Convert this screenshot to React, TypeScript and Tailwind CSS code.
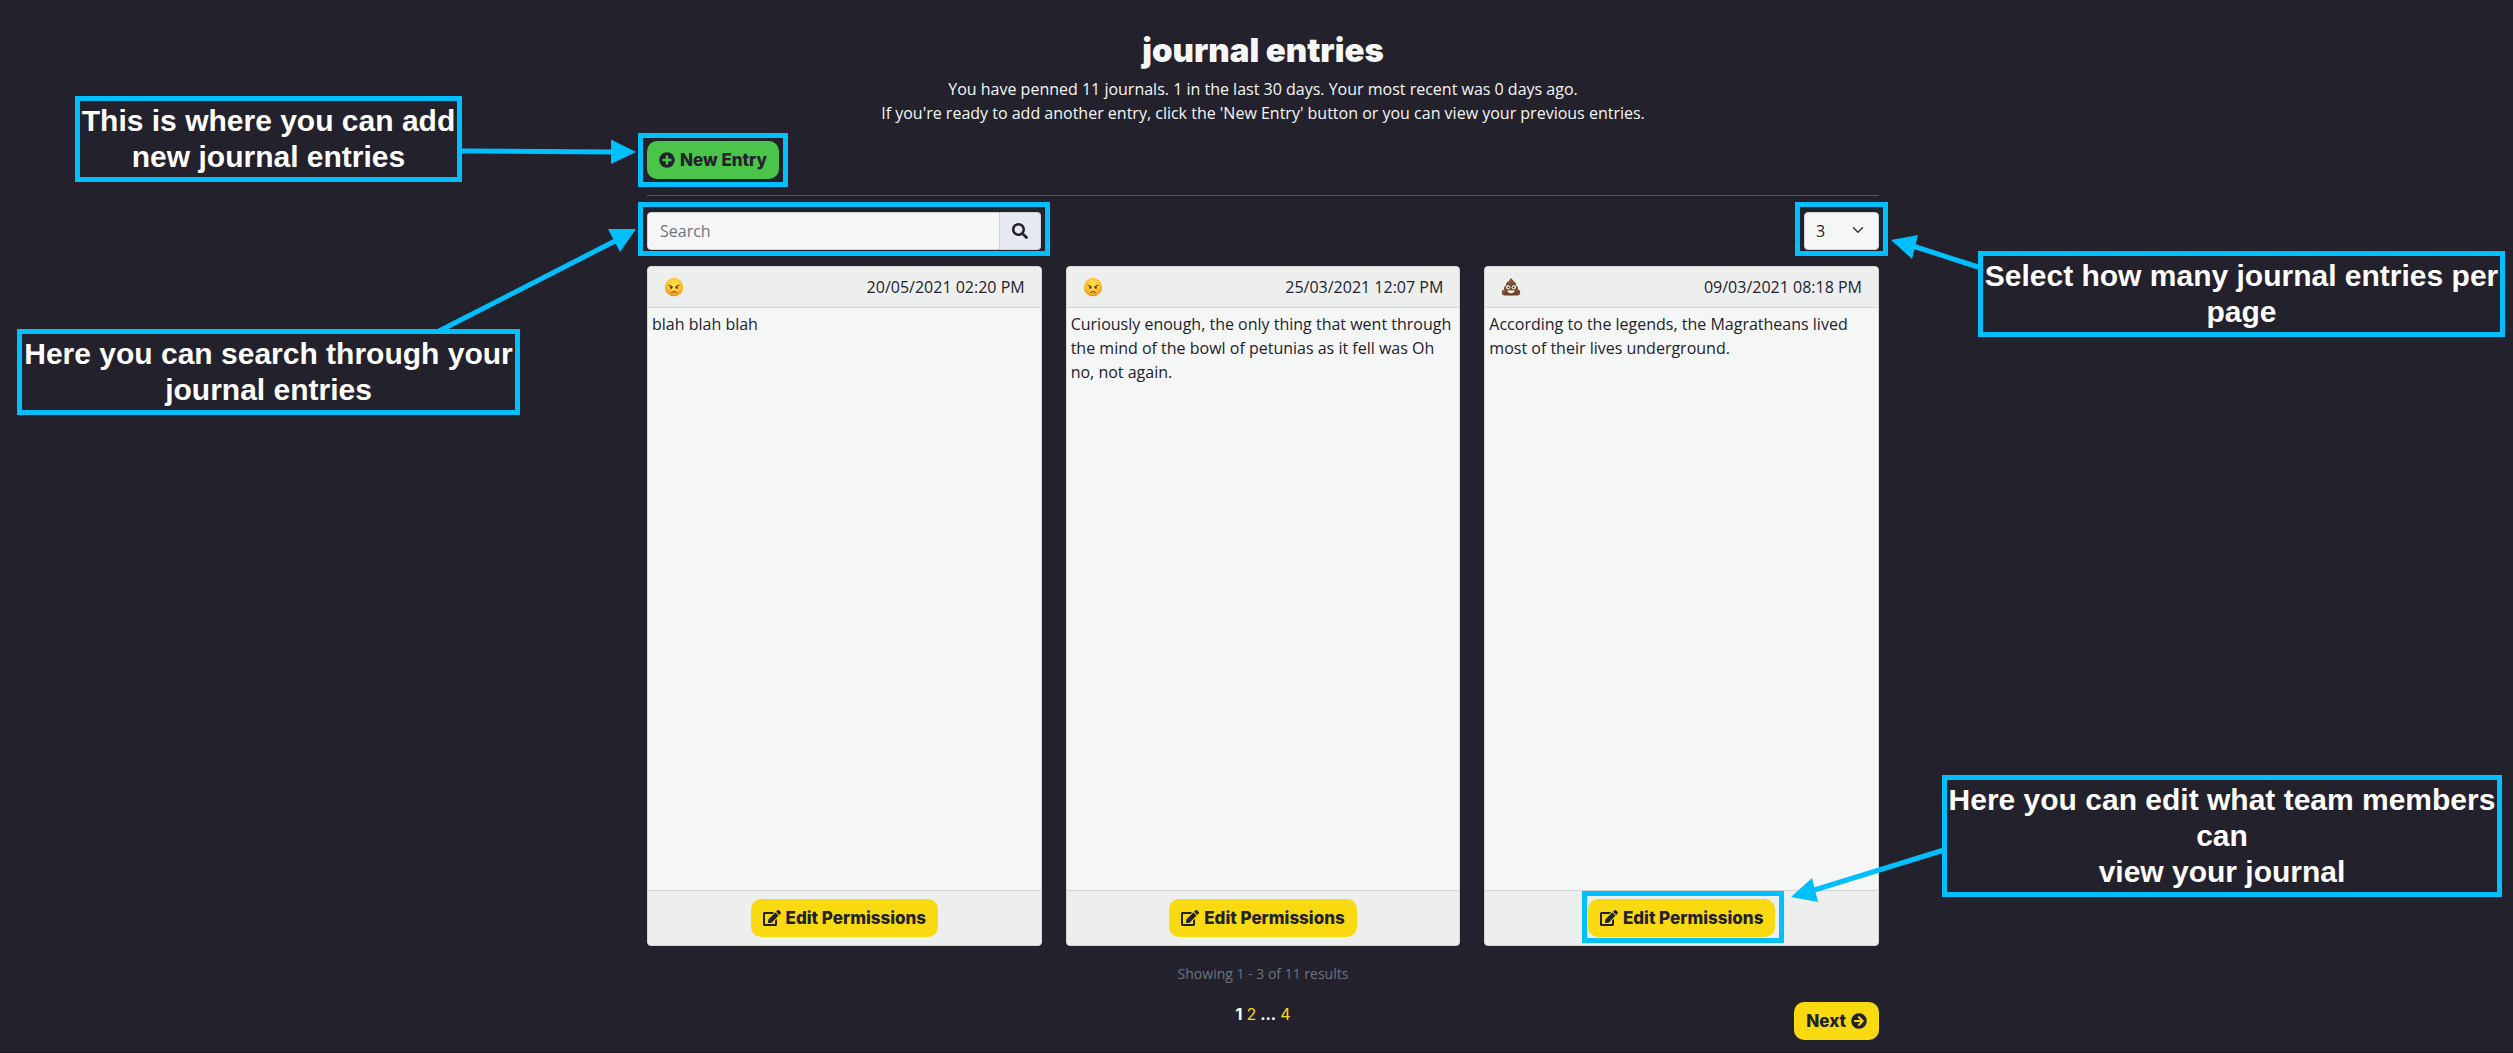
import React from "react";
import { FaArrowCircleRight, FaEdit, FaPlusCircle, FaSearch } from "react-icons/fa";

type Mood = "angry" | "poop";

type Entry = { mood: Mood; date: string; text: string; highlighted?: boolean };

const entries: Entry[] = [
  { mood: "angry", date: "20/05/2021 02:20 PM", text: "blah blah blah" },
  {
    mood: "angry",
    date: "25/03/2021 12:07 PM",
    text: "Curiously enough, the only thing that went through the mind of the bowl of petunias as it fell was Oh no, not again.",
  },
  {
    mood: "poop",
    date: "09/03/2021 08:18 PM",
    text: "According to the legends, the Magratheans lived most of their lives underground.",
    highlighted: true,
  },
];

function AngryFace() {
  return (
    <svg viewBox="0 0 20 20" className="size-5" role="img" aria-label="Angry">
      <defs>
        <radialGradient id="angry-face" cx="0.5" cy="0.35" r="0.7">
          <stop offset="0" stopColor="#ffe64f" />
          <stop offset="0.6" stopColor="#fdc02f" />
          <stop offset="1" stopColor="#ee8413" />
        </radialGradient>
      </defs>
      <circle cx="10" cy="10" r="9.2" fill="url(#angry-face)" />
      <g stroke="#6b3a0c" fill="none" strokeLinecap="round">
        <path d="M4.8 8.2 Q7 8.4 8.7 10M15.2 8.2 Q13 8.4 11.3 10" strokeWidth="1" />
        <path d="M7.6 15.4 Q10 13.4 12.4 15.4" strokeWidth="1" />
      </g>
      <ellipse cx="7.1" cy="10.6" rx="1" ry="1.3" fill="#5a2f0a" />
      <ellipse cx="12.9" cy="10.6" rx="1" ry="1.3" fill="#5a2f0a" />
    </svg>
  );
}

function PoopFace() {
  return (
    <svg viewBox="0 0 20 20" className="size-5" role="img" aria-label="Poop">
      <g fill="#7d4b30">
        <path d="M9 1C11.500 2 13.200 4 13.300 6.500H6.400C6.400 4.500 9.600 3.500 9 1z" />
        <rect x="5" y="4.800" width="10" height="5" rx="2.500" />
        <rect x="3" y="8.400" width="14" height="5.800" rx="2.900" />
        <rect x="0.800" y="12.600" width="18.400" height="6" rx="3" />
      </g>
      <path d="M5.800 8.800Q10 9.800 14.200 8.200M3 17Q10 18.800 17 16.800" stroke="#5c3422" strokeWidth="0.8" fill="none" />
      <path d="M9.800 3.200Q10 4.800 8 5.800M4 13.600Q2.500 13.800 2.200 15" stroke="#a9745a" strokeWidth="0.8" fill="none" />
      <circle cx="7.200" cy="10.300" r="2.100" fill="#fff" />
      <circle cx="12.800" cy="10.300" r="2.100" fill="#fff" />
      <circle cx="7.500" cy="10.400" r="1" fill="#222" />
      <circle cx="12.500" cy="10.400" r="1" fill="#222" />
      <path d="M6.300 13.600h7.400c-.5 1.900-2 2.700-3.700 2.700s-3.200-.8-3.700-2.700z" fill="#fff" />
    </svg>
  );
}

const highlight = "pointer-events-none absolute border-5 border-[#00bfff]";
const buttonBase =
  "flex h-[38px] items-center gap-[5px] rounded-[10px] px-3 font-['Inter',sans-serif] text-[17px] font-extrabold text-[#23212c]";

function EntryCard({ entry }: { entry: Entry }) {
  return (
    <article className="flex min-h-[680px] flex-col rounded border border-[#d5d7d7] bg-[#f5f7f6]">
      <header className="flex h-[41px] items-center justify-between rounded-t border-b border-[#d2d4d4] bg-[#edefee] px-4">
        {entry.mood === "angry" ? <AngryFace /> : <PoopFace />}
        <time>{entry.date}</time>
      </header>
      <p className="grow p-1">{entry.text}</p>
      <footer className="flex justify-center rounded-b border-t border-[#d2d4d4] bg-[#edefee] py-2">
        <div className="relative">
          <button type="button" className={`${buttonBase} bg-[#f9d90f]`}>
            <FaEdit className="size-[18px]" />
            Edit Permissions
          </button>
          {entry.highlighted && <div className={`${highlight} -top-2 -right-[9px] -bottom-[6px] -left-[6px]`} />}
        </div>
      </footer>
    </article>
  );
}

function Note({ className, children }: { className: string; children: React.ReactNode }) {
  return (
    <p
      className={`absolute border-5 border-[#00bfff] py-0.5 text-center font-['Liberation_Sans',Arial,sans-serif] text-[30px] leading-9 font-bold text-white ${className}`}
    >
      {children}
    </p>
  );
}

/* Pointers from each note to the control it explains, in the content column's coordinates. */
function Arrows() {
  return (
    <svg className="pointer-events-none absolute top-0 left-0 size-px overflow-visible" aria-hidden="true">
      <g stroke="#00bfff" strokeWidth="5">
        <path d="M-185 151L-32 152" />
        <path d="M-208 331L-30 240" />
        <path d="M1331 267L1266 246" />
        <path d="M1297 850L1164 891" />
      </g>
      <g fill="#00bfff">
        <path d="M-11 152L-36 139.500V164z" />
        <path d="M-11 229L-39 229L-27 252z" />
        <path d="M1244 240L1271 235L1265 259z" />
        <path d="M1144 897L1165 878L1171 902z" />
      </g>
    </svg>
  );
}

export default function App() {
  return (
    <div className="min-h-screen overflow-hidden border-b border-[#1b1922] bg-[#23212c] pl-[13px] font-['Open_Sans','Noto_Sans',sans-serif] text-base leading-6 text-[#23212c]">
      <main className="relative mx-auto max-w-[1232px]">
        <div className="pt-8 text-center text-[#f5f7f6]">
          <h1 className="mb-[9px] font-['Inter',sans-serif] text-[33px] leading-9 font-black">journal entries</h1>
          <p>You have penned 11 journals. 1 in the last 30 days. Your most recent was 0 days ago.</p>
          <p>If you're ready to add another entry, click the 'New Entry' button or you can view your previous entries.</p>
        </div>

        <div className="mt-4 flex">
          <div className="relative">
            <button type="button" className={`${buttonBase} bg-[#4ac54a]`}>
              <FaPlusCircle className="size-4" />
              New Entry
            </button>
            <div className={`${highlight} -inset-x-[9px] -inset-y-2`} />
          </div>
        </div>

        <hr className="my-4 border-[#57555e]" />

        <div className="flex justify-between">
          <form className="relative flex h-[38px] w-[394px]" onSubmit={(e) => e.preventDefault()}>
            <input
              type="search"
              aria-label="Search"
              placeholder="Search"
              className="min-w-0 grow rounded-l border border-[#ced4da] bg-[#f5f7f6] px-3 placeholder:text-[#6c757d]"
            />
            <button
              type="submit"
              aria-label="Search entries"
              className="flex w-[41px] items-center justify-center rounded-r border border-l-0 border-[#ced4da] bg-[#e6e9ef]"
            >
              <FaSearch className="size-4" />
            </button>
            <div className={`${highlight} -inset-x-[9px] -top-[10px] -bottom-[6px]`} />
          </form>
          <div className="relative flex">
            <select
              aria-label="Entries per page"
              defaultValue="3"
              className="h-[38px] w-[75px] appearance-none rounded border border-[#ced4da] bg-[#f5f7f6] pl-[11px]"
            >
              <option>3</option>
              <option>6</option>
              <option>9</option>
            </select>
            <svg
              viewBox="0 0 16 16"
              className="pointer-events-none absolute top-3 right-[15px] size-3 fill-none stroke-[#343a40] stroke-2"
              aria-hidden="true"
            >
              <path d="M2 5l6 6 6-6" strokeLinecap="round" strokeLinejoin="round" />
            </svg>
            <div className={`${highlight} -inset-x-[9px] -top-[10px] -bottom-[6px]`} />
          </div>
        </div>

        <section aria-label="Entries" className="mt-4 grid grid-cols-3 gap-6">
          {entries.map((entry) => (
            <EntryCard key={entry.date} entry={entry} />
          ))}
        </section>

        <p className="mt-4 text-center text-sm leading-6 text-[#6c757d]">Showing 1 - 3 of 11 results</p>

        <div className="mt-4 grid grid-cols-[1fr_auto_1fr] items-start">
          <nav
            aria-label="Pages"
            className="col-start-2 flex gap-1 font-['Inter',sans-serif] text-base text-white"
          >
            <span className="font-bold" aria-current="page">1</span>
            <a href="#page-2" className="text-[#f9d90f]">2</a>
            <span className="font-bold">...</span>
            <a href="#page-4" className="text-[#f9d90f]">4</a>
          </nav>
          <button type="button" className={`${buttonBase} justify-self-end bg-[#f9d90f]`}>
            Next
            <FaArrowCircleRight className="size-4" />
          </button>
        </div>

        <aside aria-label="Page guide">
          <Note className="top-24 -left-[572px] w-[387px]">This is where you can add new journal entries</Note>
          <Note className="top-[329px] -left-[630px] w-[503px]">Here you can search through your journal entries</Note>
          <Note className="top-[251px] left-[1331px] w-[527px]">Select how many journal entries per page</Note>
          <Note className="top-[775px] left-[1295px] w-[560px]">
            Here you can edit what team members can
            <br />
            view your journal
          </Note>
          <Arrows />
        </aside>
      </main>
    </div>
  );
}
